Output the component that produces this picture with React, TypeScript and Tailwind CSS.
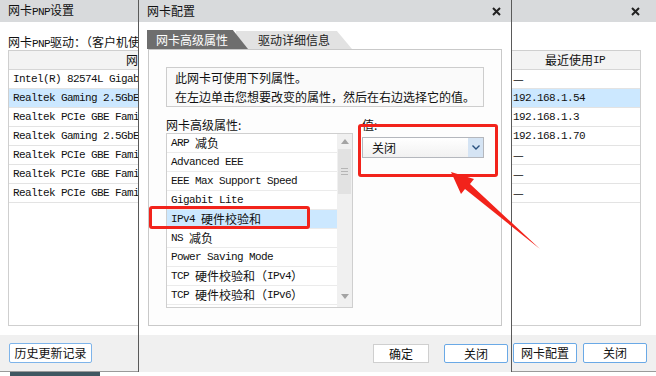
import React from "react";

const CJK_SPLIT = /([\u2000-\u206f\u3000-\u9fff\uff00-\uffef]+)/;
const CJK_TEST = /[\u2000-\u206f\u3000-\u9fff\uff00-\uffef]/;

function Mixed({ text }: { text: string }) {
  return (
    <>
      {text
        .split(CJK_SPLIT)
        .filter((p) => p.length > 0)
        .map((p, i) =>
          CJK_TEST.test(p) ? (
            <span key={i} className="font-['Noto_Sans_CJK_SC',sans-serif] text-[12px] tracking-normal">
              {p}
            </span>
          ) : (
            <span key={i} className="font-['Liberation_Mono',monospace] text-[11px] tracking-[-0.6px]">
              {p}
            </span>
          )
        )}
    </>
  );
}

const rows = [
  { name: "Intel(R) 82574L Gigabit Network Connection", mac: "00-0C-29-4A-1B-2C", ip: "—", sel: false },
  { name: "Realtek Gaming 2.5GbE Family Controller", mac: "00-E0-4C-68-01-23", ip: "192.168.1.54", sel: true },
  { name: "Realtek PCIe GBE Family Controller", mac: "00-E0-4C-68-02-34", ip: "192.168.1.3", sel: false },
  { name: "Realtek Gaming 2.5GbE Family Controller", mac: "00-E0-4C-68-03-45", ip: "192.168.1.70", sel: false },
  { name: "Realtek PCIe GBE Family Controller #2", mac: "00-E0-4C-68-04-56", ip: "—", sel: false },
  { name: "Realtek PCIe GBE Family Controller #3", mac: "00-E0-4C-68-05-67", ip: "—", sel: false },
  { name: "Realtek PCIe GBE Family Controller #4", mac: "00-E0-4C-68-06-78", ip: "—", sel: false },
];

const props = [
  "ARP 减负",
  "Advanced EEE",
  "EEE Max Support Speed",
  "Gigabit Lite",
  "IPv4 硬件校验和",
  "NS 减负",
  "Power Saving Mode",
  "TCP 硬件校验和（IPv4）",
  "TCP 硬件校验和（IPv6）",
  "UDP 硬件校验和（IPv4）",
];

function CloseX() {
  return (
    <svg width="9" height="9" viewBox="0 0 9 9" className="block">
      <path d="M1 1 L8 8 M8 1 L1 8" stroke="#222" strokeWidth="2" />
    </svg>
  );
}

export default function App() {
  return (
    <div className="relative w-[656px] h-[376px] overflow-hidden bg-white text-[12px] text-[#111] font-['Noto_Sans_CJK_SC',sans-serif]">
      {/* Background window */}
      <div className="flex flex-col h-full">
        <div className="h-[22px] bg-[#d8dadc] flex items-center justify-between pl-[8px] pr-[16px] whitespace-pre">
          <span className="leading-none">
            <Mixed text="网卡PNP设置" />
          </span>
          <CloseX />
        </div>
        <div className="h-[313px] bg-white pl-[8px] flex flex-col">
          <div className="mt-[11px] h-[17px] leading-[17px] whitespace-pre">
            <Mixed text="网卡PNP驱动：（客户机使用的网卡驱动列表）" />
          </div>
          <div className="h-[276px] w-[633px] border border-[#cfcfcf] flex flex-col">
            <div className="flex h-[19px] bg-[#f3f3f3] border-b border-[#d6d6d6] shrink-0">
              <div className="w-[283px] border-r border-[#d6d6d6] flex items-center justify-center">网卡名称</div>
              <div className="w-[218px] border-r border-[#d6d6d6] flex items-center justify-center">MAC地址</div>
              <div className="flex-1 flex items-center justify-center whitespace-pre">
                <Mixed text="最近使用IP" />
              </div>
            </div>
            {rows.map((r, i) => (
              <div
                key={i}
                className={`flex h-[19px] border-b border-[#e3e3e3] shrink-0 whitespace-pre ${r.sel ? "bg-[#cce8ff]" : "bg-white"}`}
              >
                <div className="w-[283px] pl-[4px] flex items-center overflow-hidden">
                  <Mixed text={r.name} />
                </div>
                <div className="w-[218px] pl-[4px] flex items-center overflow-hidden">
                  <Mixed text={r.mac} />
                </div>
                <div className="flex-1 pl-[3px] flex items-center overflow-hidden">
                  <Mixed text={r.ip} />
                </div>
              </div>
            ))}
          </div>
        </div>
        <div className="h-[36px] bg-[#f0f0f0] flex items-center justify-between pl-[9px] pr-[9px]">
          <button className="h-[20px] w-[83px] border border-[#7eb4ea] rounded-[2px] bg-white text-[12px] leading-none flex items-center justify-center">
            历史更新记录
          </button>
          <div className="flex gap-[6px]">
            <button className="h-[20px] w-[64px] border border-[#6aa9e6] rounded-[2px] bg-white text-[12px] leading-none flex items-center justify-center">
              网卡配置
            </button>
            <button className="h-[20px] w-[64px] border border-[#6aa9e6] rounded-[2px] bg-white text-[12px] leading-none flex items-center justify-center">
              关闭
            </button>
          </div>
        </div>
        <div className="h-px bg-[#9a9a9a]" />
        <div className="flex-1 bg-white pl-[10px]">
          <div className="w-[90px] h-full bg-[#3f5761]" />
        </div>
      </div>

      {/* Dialog window */}
      <div className="absolute left-[138px] top-0 w-[374px] h-[372px] border-x border-[#5a5a5a] bg-white flex flex-col">
        <div className="h-[22px] bg-[#d8dadc] flex items-center justify-between pl-[8px] pr-[10px] shrink-0">
          <span className="leading-none">网卡配置</span>
          <CloseX />
        </div>
        <div className="h-[313px] flex flex-col pl-[8px]">
          {/* tabs */}
          <div className="mt-[8px] h-[19px] flex items-end">
            <div className="relative z-10 w-[101px] h-[19px] bg-[#6e6e6e] text-white pl-[9px] flex items-center [clip-path:polygon(0_0,85%_0,100%_100%,0_100%)]">
              网卡高级属性
            </div>
            <div className="-ml-[12px] w-[116px] h-[18px] bg-[#e2e2e2] text-[#222] pl-[22px] flex items-center [clip-path:polygon(0_0,87%_0,100%_100%,0_100%)]">
              驱动详细信息
            </div>
          </div>
          {/* panel */}
          <div className="ml-[1px] w-[354px] h-[277px] border border-[#c9c9c9] bg-[#fdfdfd] px-[17px]">
            <div className="mt-[17px] w-[318px] h-[40px] border border-[#cdcdcd] bg-[#fafafa] pl-[8px] leading-[19px]">
              <div>此网卡可使用下列属性。</div>
              <div>在左边单击您想要改变的属性，然后在右边选择它的值。</div>
            </div>
            <div className="flex">
              <div className="w-[187px] flex flex-col">
                <div className="mt-[10px] h-[16px] leading-[16px]">网卡高级属性:</div>
                <div className="h-[175px] border border-[#cfcfcf] bg-white flex overflow-hidden">
                  <div className="flex-1 flex flex-col overflow-hidden">
                    {props.map((p, i) => (
                      <div
                        key={i}
                        className={`h-[19px] shrink-0 border-b border-[#ebebeb] pl-[4px] flex items-center whitespace-pre ${i === 4 ? "bg-[#cce8ff]" : ""}`}
                      >
                        <Mixed text={p} />
                      </div>
                    ))}
                  </div>
                  <div className="w-[15px] bg-[#f0f0f0] flex flex-col items-center">
                    <div className="h-[15px] flex items-center justify-center">
                      <svg width="8" height="5" viewBox="0 0 8 5">
                        <path d="M0 5 L4 0 L8 5 Z" fill="#a3a3a3" />
                      </svg>
                    </div>
                    <div className="w-[13px] h-[45px] bg-[#e2e2e2] flex flex-col items-center justify-center gap-[2px]">
                      <div className="w-[7px] h-px bg-[#b5b5b5]" />
                      <div className="w-[7px] h-px bg-[#b5b5b5]" />
                      <div className="w-[7px] h-px bg-[#b5b5b5]" />
                    </div>
                    <div className="flex-1" />
                    <div className="h-[15px] flex items-center justify-center mb-[3px]">
                      <svg width="8" height="5" viewBox="0 0 8 5">
                        <path d="M0 0 L8 0 L4 5 Z" fill="#a3a3a3" />
                      </svg>
                    </div>
                  </div>
                </div>
              </div>
              <div className="ml-[9px] flex flex-col">
                <div className="mt-[10px] h-[16px] leading-[16px]">值:</div>
                <div className="mt-[4px] w-[122px] h-[21px] border border-[#b4b7bd] bg-gradient-to-b from-white to-[#f1f1f1] flex">
                  <div className="flex-1 pl-[9px] flex items-center">关闭</div>
                  <div className="w-[15px] bg-[#d5e4f4] flex items-center justify-center">
                    <svg width="8" height="5" viewBox="0 0 8 5">
                      <path d="M0.5 0.5 L4 4 L7.5 0.5" stroke="#28507e" strokeWidth="1.4" fill="none" />
                    </svg>
                  </div>
                </div>
              </div>
            </div>
          </div>
        </div>
        <div className="flex-1 bg-[#f0f0f0] flex items-center justify-end pr-[3px] gap-[15px]">
          <button className="h-[19px] w-[56px] border border-[#cfcfcf] bg-white text-[12px] leading-none flex items-center justify-center">
            确定
          </button>
          <button className="h-[19px] w-[64px] border border-[#6aa9e6] rounded-[2px] bg-white text-[12px] leading-none flex items-center justify-center">
            关闭
          </button>
        </div>
      </div>

      {/* Red annotations */}
      <div className="absolute left-[358px] top-[124px] w-[140px] h-[53px] border-[3px] border-[#f2231b] rounded-[3px]" />
      <div className="absolute left-[149px] top-[206px] w-[161px] h-[23px] border-[3px] border-[#f2231b] rounded-[3px]" />
      <svg className="absolute left-0 top-0" width="656" height="376" viewBox="0 0 656 376">
        <polygon
          points="451,172 474,179 470,184 540,249 465,189 461,194"
          fill="#f2231b"
        />
      </svg>
    </div>
  );
}
